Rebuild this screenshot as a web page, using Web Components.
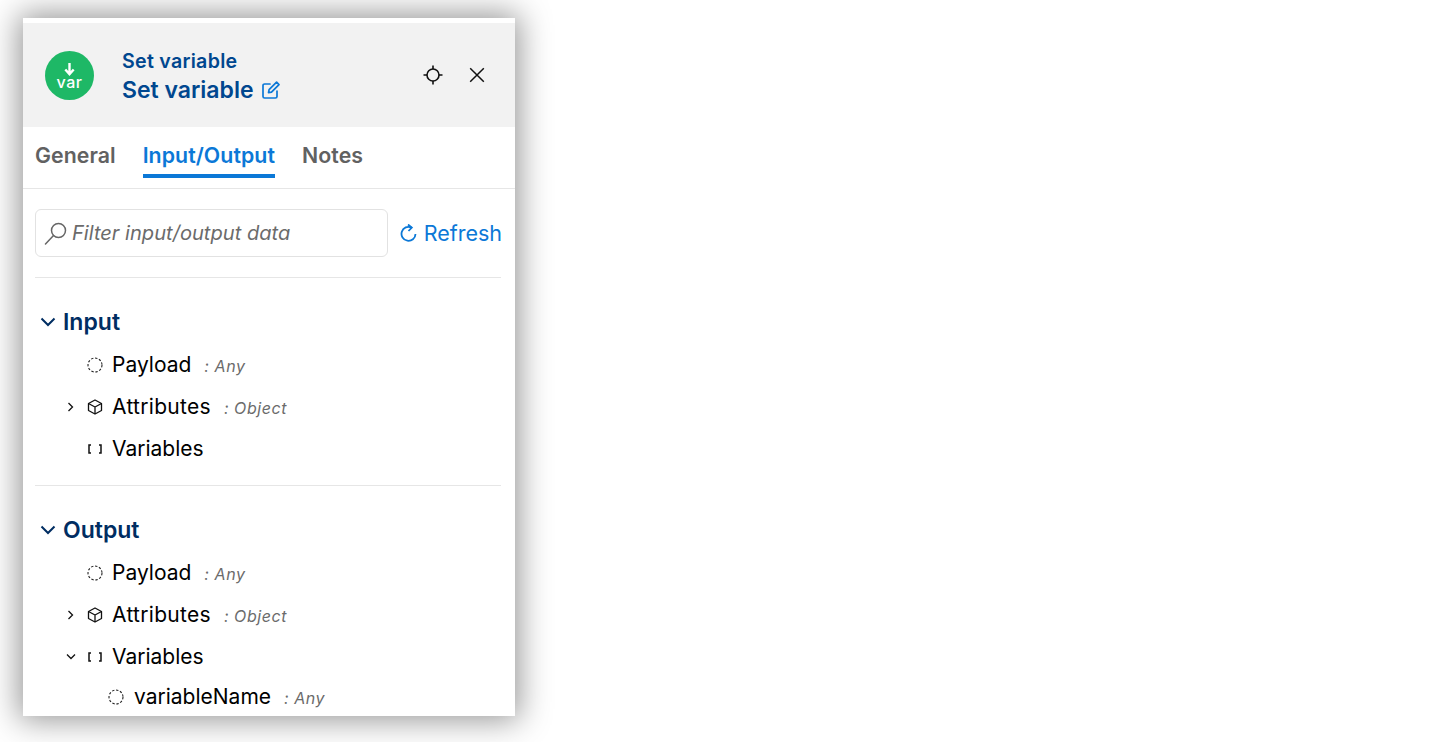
<!DOCTYPE html>
<html><head><meta charset="utf-8"><style>
html,body{margin:0;padding:0;background:#fff;height:742px;overflow:hidden;font-family:Inter,"Liberation Sans",sans-serif}
body{display:flex;align-items:flex-start;padding:18px 0 0 23px;box-sizing:border-box}
</style></head><body>
<io-panel>
  <panel-header title-small="Set variable" title-large="Set variable"></panel-header>
  <panel-tabs></panel-tabs>
  <filter-bar></filter-bar>
  <tree-section label="Input">
    <tree-row icon="any" name="Payload" type="Any"></tree-row>
    <tree-row icon="cube" caret="right" name="Attributes" type="Object" style="--track:.3px"></tree-row>
    <tree-row icon="list" name="Variables"></tree-row>
  </tree-section>
  <tree-section label="Output" divider>
    <tree-row icon="any" name="Payload" type="Any"></tree-row>
    <tree-row icon="cube" caret="right" name="Attributes" type="Object" style="--track:.3px"></tree-row>
    <tree-row icon="list" caret="down" name="Variables"></tree-row>
    <tree-row icon="any" name="variableName" type="Any" nested></tree-row>
  </tree-section>
</io-panel>
<script>
class IoPanel extends HTMLElement{constructor(){super();this.attachShadow({mode:'open'}).innerHTML=`<style>
:host{display:block;width:492px;height:698px;background:#fff;padding-top:5px;box-sizing:border-box;overflow:hidden;box-shadow:0 0 30px 4px rgba(0,0,0,.42)}
</style><slot></slot>`}}
class PanelHeader extends HTMLElement{connectedCallback(){this.attachShadow({mode:'open'}).innerHTML=`<style>
:host{display:flex;align-items:center;height:104px;background:#f2f2f2;padding:0 22px;box-sizing:border-box}
.logo{width:49px;height:49px;flex:none;display:block}
.titles{flex:1;margin-left:28px;color:#00478f;display:flex;flex-direction:column;padding-top:6px}
.s{font-size:19.600px;font-weight:600;line-height:24px;margin-top:-1px;letter-spacing:.28px}
.l{font-size:23px;font-weight:600;line-height:34px;display:flex;align-items:center;gap:8px}
.btn{display:block;flex:none}
</style>
<svg class="logo" viewBox="0 0 49 49"><circle cx="24.500" cy="24.500" r="24.500" fill="#1eb866"/><path d="M24.500 12v11M20.300 18.500l4.200 4.600 4.200-4.600" fill="none" stroke="#fff" stroke-width="2.400"/><text x="24.500" y="36.500" text-anchor="middle" font-family="Inter" font-size="16" font-weight="500" letter-spacing=".5" fill="#fff">var</text></svg>
<div class="titles"><div class="s">${this.getAttribute('title-small')}</div><div class="l">${this.getAttribute('title-large')}<svg width="18" height="18" viewBox="0 0 18 18" fill="none" stroke="#0b78d7" stroke-width="1.700" stroke-linejoin="round" stroke-linecap="round"><path d="M8 3H2.600C1.700 3 1 3.700 1 4.600v10.800c0 .9.7 1.600 1.600 1.600h10.800c.9 0 1.600-.7 1.600-1.600V10"/><path d="M6.500 11.700l.6-3L14.600 1.200l2.400 2.400-7.500 7.500z"/></svg></div></div>
<svg class="btn" width="20" height="20" viewBox="0 0 20 20" fill="none" stroke="#111" stroke-width="1.600" style="margin-right:26px"><circle cx="10" cy="10" r="6"/><path d="M10 0.500v3.500M10 16v3.500M0.500 10h3.500M16 10h3.500"/></svg>
<svg class="btn" width="16" height="16" viewBox="0 0 16 16" fill="none" stroke="#111" stroke-width="1.500" style="margin-right:8.500px"><path d="M1.200 1.200l13.600 13.600M14.800 1.200L1.200 14.800"/></svg>`}}
class PanelTabs extends HTMLElement{connectedCallback(){this.attachShadow({mode:'open'}).innerHTML=`<style>
:host{display:flex;height:62px;box-sizing:border-box;border-bottom:1px solid #e6e6e6;padding:0 12px;gap:27px;font-size:21.300px;font-weight:600;letter-spacing:.06px;color:#616161}
.t{height:51px;line-height:57px;box-sizing:border-box}
.a{color:#0b78d7;border-bottom:4px solid #0b78d7}
</style><div class="t">General</div><div class="t a">Input/Output</div><div class="t">Notes</div>`}}
class FilterBar extends HTMLElement{connectedCallback(){this.attachShadow({mode:'open'}).innerHTML=`<style>
:host{display:flex;align-items:center;margin:20px 14px 0 12px;padding-bottom:20px;border-bottom:1px solid #e6e6e6}
.box{flex:none;width:353px;height:48px;box-sizing:border-box;border:1px solid #e2e2e2;border-radius:6px;display:flex;align-items:center;padding-left:8px;gap:5px;font-size:20.100px;line-height:46px;font-style:italic;color:#6b6b6b}
.r{display:flex;align-items:center;gap:7px;margin-left:auto;margin-right:-1px;font-size:21.500px;color:#0b78d7;white-space:nowrap}
</style><div class="box"><svg width="23" height="23" viewBox="0 0 23 23" fill="none" stroke="#666" stroke-width="1.500"><circle cx="14.500" cy="8.500" r="7"/><path d="M9.500 13.500L1.500 22" stroke-linecap="round"/></svg><span>Filter input/output data</span></div>
<div class="r"><svg width="17" height="18" viewBox="0 0 17 18" fill="none" stroke="#0b78d7" stroke-width="1.800"><path d="M11.500 3.500A7 7 0 1 0 15.500 10"/><path d="M8 .500l3.800 3-3.300 3.500"/></svg>Refresh</div>`}}
class TreeSection extends HTMLElement{connectedCallback(){const d=this.hasAttribute('divider');this.attachShadow({mode:'open'}).innerHTML=`<style>
:host{display:block;margin:${d?'15px':'0'} 14px 0 12px;${d?'border-top:1px solid #e6e6e6;':''}}
.h{display:flex;align-items:center;height:32px;margin-top:28px;margin-bottom:6px;font-size:23px;font-weight:600;color:#002d62;gap:7px;padding-left:5px}
.l{display:block}
</style><div class="h"><svg width="16" height="10" viewBox="0 0 16 10" fill="none" stroke="#002d62" stroke-width="2"><path d="M1.500 1.500L8 8l6.500-6.500"/></svg><span>${this.getAttribute('label')}</span></div><div class="l"><slot></slot></div>`}}
const ICONS={
any:`<svg width="16" height="16" viewBox="0 0 16 16" fill="none" stroke="#222" stroke-width="1.100" stroke-dasharray="2.400 1.700"><circle cx="8" cy="8" r="7"/></svg>`,
cube:`<svg width="16" height="16" viewBox="0 0 16 16" fill="none" stroke="#111" stroke-width="1.300" stroke-linejoin="round"><path d="M8 1l6.500 3.500v7L8 15l-6.500-3.500v-7z"/><path d="M1.500 4.500L8 8l6.500-3.500M8 8v7"/></svg>`,
list:`<svg width="16" height="16" viewBox="0 0 16 16" fill="none" stroke="#111" stroke-width="1.500"><path d="M4 4H2v8h2M12 4h2v8h-2"/></svg>`};
class TreeRow extends HTMLElement{connectedCallback(){const c=this.getAttribute('caret'),t=this.getAttribute('type'),n=this.hasAttribute('nested');
const car=c=='right'?'<path d="M1.500 1l4 4-4 4"/>':c=='down'?'<path d="M0 2.500l4 4 4-4"/>':'';
this.attachShadow({mode:'open'}).innerHTML=`<style>
:host{display:flex;align-items:center;height:42px;padding-left:${n?'73px':'30px'};${n?'margin-top:-2px;':''}font-size:21px;color:#000;white-space:nowrap}
.c{width:14px;height:10px;flex:none;margin-right:8px}
.i{flex:none;width:16px;height:16px;margin-right:${n?'10px':'9px'};display:block}
.i svg{display:block}
.n{letter-spacing:var(--track,0);margin-top:-1px}
.t{margin-left:13px;font-size:16px;font-style:italic;color:#6b6b6b;letter-spacing:.55px;margin-top:2px}
</style><svg class="c" viewBox="0 0 10 10" style="${n?'display:none':''}" fill="none" stroke="#111" stroke-width="1.300">${car}</svg><span class="i">${ICONS[this.getAttribute('icon')]}</span><span class="n">${this.getAttribute('name')}</span>${t?`<span class="t">: ${t}</span>`:''}`}}
customElements.define('io-panel',IoPanel);customElements.define('panel-header',PanelHeader);customElements.define('panel-tabs',PanelTabs);customElements.define('filter-bar',FilterBar);customElements.define('tree-section',TreeSection);customElements.define('tree-row',TreeRow);
</script></body></html>
